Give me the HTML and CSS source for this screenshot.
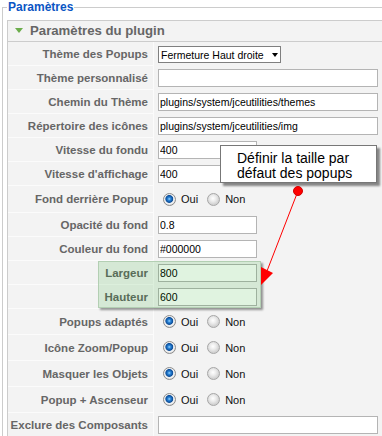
FILE: index.html
```html
<!DOCTYPE html>
<html lang="fr">
<head>
    <meta charset="UTF-8">
    <meta name="viewport" content="width=device-width, initial-scale=1.0">
    <title>Paramètres du plugin</title>
    <link rel="stylesheet" href="styles.css">
</head>
<body>

    <fieldset class="adminform">
        <legend>Paramètres</legend>
        <div class="panel">
            <h3 class="panel-title"><span class="toggle"></span>Paramètres du plugin</h3>
            <table class="paramlist">
                <tr>
                    <td class="key">Thème des Popups</td>
                    <td class="value select-cell">
                        <span class="select-box">
                            <select><option>Fermeture Haut droite</option></select>
                        </span>
                    </td>
                </tr>
                <tr>
                    <td class="key">Thème personnalisé</td>
                    <td class="value"><input type="text" class="text wide" value=""></td>
                </tr>
                <tr>
                    <td class="key">Chemin du Thème</td>
                    <td class="value"><input type="text" class="text wide" value="plugins/system/jceutilities/themes"></td>
                </tr>
                <tr>
                    <td class="key">Répertoire des icônes</td>
                    <td class="value"><input type="text" class="text wide" value="plugins/system/jceutilities/img"></td>
                </tr>
                <tr>
                    <td class="key">Vitesse du fondu</td>
                    <td class="value"><input type="text" class="text short" value="400"></td>
                </tr>
                <tr>
                    <td class="key">Vitesse d'affichage</td>
                    <td class="value"><input type="text" class="text short" value="400"></td>
                </tr>
                <tr>
                    <td class="key">Fond derrière Popup</td>
                    <td class="value radio-cell">
                        <div class="choice tall">
                            <input type="radio" name="overlay" checked><label>Oui</label>
                            <input type="radio" name="overlay"><label>Non</label>
                        </div>
                    </td>
                </tr>
                <tr>
                    <td class="key">Opacité du fond</td>
                    <td class="value"><input type="text" class="text short" value="0.8"></td>
                </tr>
                <tr>
                    <td class="key">Couleur du fond</td>
                    <td class="value"><input type="text" class="text short" value="#000000"></td>
                </tr>
                <tr>
                    <td class="key">Largeur</td>
                    <td class="value"><input type="text" class="text short" value="800"></td>
                </tr>
                <tr>
                    <td class="key">Hauteur</td>
                    <td class="value"><input type="text" class="text short" value="600"></td>
                </tr>
                <tr>
                    <td class="key">Popups adaptés</td>
                    <td class="value radio-cell">
                        <div class="choice">
                            <input type="radio" name="resize" checked><label>Oui</label>
                            <input type="radio" name="resize"><label>Non</label>
                        </div>
                    </td>
                </tr>
                <tr>
                    <td class="key">Icône Zoom/Popup</td>
                    <td class="value radio-cell">
                        <div class="choice">
                            <input type="radio" name="zoom" checked><label>Oui</label>
                            <input type="radio" name="zoom"><label>Non</label>
                        </div>
                    </td>
                </tr>
                <tr>
                    <td class="key">Masquer les Objets</td>
                    <td class="value radio-cell">
                        <div class="choice">
                            <input type="radio" name="hide" checked><label>Oui</label>
                            <input type="radio" name="hide"><label>Non</label>
                        </div>
                    </td>
                </tr>
                <tr>
                    <td class="key">Popup + Ascenseur</td>
                    <td class="value radio-cell">
                        <div class="choice">
                            <input type="radio" name="scroll" checked><label>Oui</label>
                            <input type="radio" name="scroll"><label>Non</label>
                        </div>
                    </td>
                </tr>
                <tr>
                    <td class="key">Exclure des Composants</td>
                    <td class="value"><input type="text" class="text wide" value=""></td>
                </tr>
            </table>
        </div>
    </fieldset>

    <!-- annotation: highlight + callout -->
    <div class="highlight"></div>
    <div class="tip">Définir la taille par<br>défaut des popups</div>
    <svg class="pointer" width="382" height="436" viewBox="0 0 382 436">
        <line x1="298" y1="191" x2="267" y2="271" stroke="#ff0000" stroke-width="1"/>
        <polygon points="261,267 273,273 261,285" fill="#ff0000"/>
        <circle cx="298" cy="191" r="4.5" fill="#ff0000" stroke="#d00000" stroke-width="1"/>
    </svg>

</body>
</html>
```

FILE: styles.css
```css
html, body {
    margin: 0;
    padding: 0;
}
body {
    position: relative;
    width: 382px;
    height: 436px;
    overflow: hidden;
    background-color: #fff;
    font-family: "Liberation Sans", Arial, sans-serif;
    font-size: 11px;
    color: #000;
}
.adminform {
    margin: 0 0 0 2px;
    padding: 0 0 0 4px;
    border: 1px solid #ccc;
    border-right: 0;
    min-width: 0;
}
.adminform legend {
    color: #0b55c4;
    font-size: 12px;
    font-weight: bold;
    line-height: 14px;
    padding: 0 1px;
}
.panel {
    margin-top: 6px;
    border: 1px solid #ccc;
    border-right: 0;
    background-color: #f3f3f3;
}
.panel-title {
    margin: 0;
    height: 20px;
    line-height: 20px;
    padding-left: 7px;
    border-bottom: 1px solid #ccc;
    font-size: 13.2px;
    font-weight: bold;
    color: #666;
}
.toggle {
    display: inline-block;
    width: 0;
    height: 0;
    border-left: 4px solid transparent;
    border-right: 4px solid transparent;
    border-top: 5px solid #6cad4c;
    margin-right: 7px;
    vertical-align: 2px;
}
.paramlist {
    border-spacing: 0;
    width: 100%;
}
.key {
    width: 141px;
    padding: 0 5px 0 0;
    text-align: right;
    white-space: nowrap;
    font-size: 11.5px;
    font-weight: bold;
    color: #666;
    border-right: 1px solid #fbfbfb;
    border-bottom: 1px solid #fbfbfb;
    vertical-align: middle;
}
.value {
    padding: 3px 4px 2px;
    border-bottom: 1px solid #f3f3f3;
    vertical-align: middle;
}
.select-cell {
    padding: 4px 4px 2px;
}
.radio-cell {
    padding: 0 0 0 9px;
}
.text {
    display: block;
    box-sizing: border-box;
    height: 18px;
    margin: 0;
    padding: 0 1px;
    border: 1px solid #b4b4b4;
    background-color: #fff;
    font-family: "Liberation Sans", Arial, sans-serif;
    font-size: 10.5px;
    color: #000;
}
.wide {
    width: 220px;
}
.short {
    width: 99px;
}
.select-box {
    position: relative;
    display: block;
    width: 123px;
    height: 17px;
}
.select-box select {
    appearance: none;
    -webkit-appearance: none;
    box-sizing: border-box;
    width: 100%;
    height: 17px;
    margin: 0;
    padding: 0 0 0 2px;
    border: 1px solid #7f7f7f;
    border-radius: 0;
    background-color: #fff;
    font-family: "Liberation Sans", Arial, sans-serif;
    font-size: 10.5px;
    color: #000;
}
.select-box::after {
    content: "";
    position: absolute;
    right: 3px;
    top: 7px;
    border-left: 3.5px solid transparent;
    border-right: 3.5px solid transparent;
    border-top: 4px solid #000;
}
.choice {
    display: flex;
    align-items: center;
    height: 25px;
}
.choice.tall {
    height: 26px;
}
.choice input {
    appearance: none;
    -webkit-appearance: none;
    width: 13px;
    height: 13px;
    margin: 0;
    border: 1px solid #a6a6a6;
    border-radius: 50%;
    background: radial-gradient(circle at 45% 40%, #ffffff 0, #ececec 3px, #d2d2d2 6px);
}
.choice input:checked {
    border-color: #8c8c8c;
    background: radial-gradient(circle at 48% 45%, #9fd6ff 0, #2b86d9 1.5px, #0b4c98 3.5px, #e6ebef 4.3px, #f4f4f4 5px, #cfcfcf 6.5px);
}
.choice label {
    margin: 0 9px 0 5px;
    font-size: 11px;
    color: #111;
}
.highlight {
    position: absolute;
    left: 98px;
    top: 261px;
    width: 163px;
    height: 47px;
    box-sizing: border-box;
    border: 1px solid #b3cfb3;
    background-color: rgba(0, 160, 0, 0.12);
    box-shadow: 2px 2px 2px rgba(0, 0, 0, 0.4);
}
.tip {
    position: absolute;
    left: 220px;
    top: 145px;
    width: 157px;
    height: 38px;
    box-sizing: border-box;
    padding: 5px 0 0 16px;
    border: 1px solid #777;
    background-color: #fff;
    box-shadow: 3px 3px 2px rgba(0, 0, 0, 0.45);
    font-size: 14px;
    line-height: 15px;
    color: #000;
}
.pointer {
    position: absolute;
    left: 0;
    top: 0;
    pointer-events: none;
}
```
